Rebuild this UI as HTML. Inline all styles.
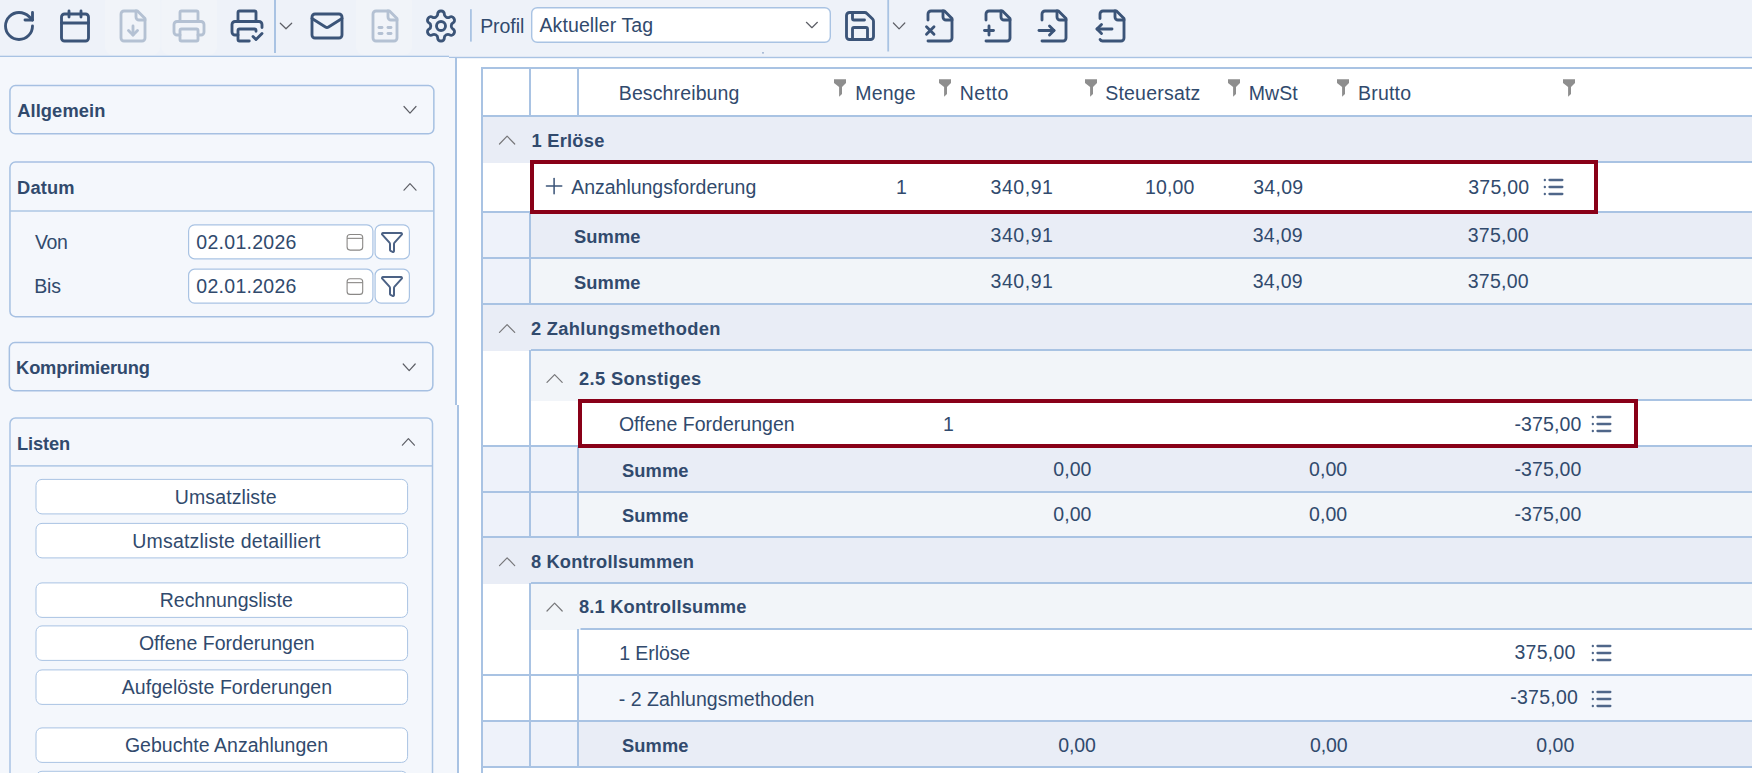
<!DOCTYPE html><html lang="de"><head><meta charset="utf-8"><title>Tagesabschluss</title><style>

html,body{margin:0;padding:0}
body{width:1752px;height:773px;overflow:hidden;position:relative;background:#fff;
 font-family:"Liberation Sans",Arial,sans-serif;color:#314a6d;}
#bg{position:absolute;left:0;top:0}
.t{position:absolute;white-space:nowrap;line-height:1;font-size:19.5px}
.b{font-weight:bold;font-size:18.3px}
.ic{position:absolute;overflow:visible}

</style></head><body>
<svg id="bg" width="1752" height="773" viewBox="0 0 1752 773"><rect x="0" y="0" width="449" height="56" fill="#eef2f9"/><rect x="449" y="0" width="1303" height="57" fill="#eef2f9"/><rect x="105" y="-6" width="55.30000000000001" height="61" rx="8" fill="#f1f4f9"/><rect x="161.3" y="-6" width="55.69999999999999" height="61" rx="8" fill="#f1f4f9"/><rect x="356" y="-6" width="56" height="61" rx="8" fill="#f1f4f9"/><rect x="0" y="55.7" width="449" height="1.4" fill="#a9c3e3"/><rect x="449" y="56.8" width="1303" height="1.4" fill="#a9c3e3"/><rect x="0" y="57.1" width="449" height="715.9" fill="#f4f7fc"/><rect x="449" y="58.2" width="7" height="714.8" fill="#f4f7fc"/><rect x="456" y="405" width="2" height="368" fill="#f4f7fc"/><rect x="455" y="57.5" width="2" height="347.5" fill="#a9c3e3"/><rect x="457" y="405" width="2" height="368" fill="#a9c3e3"/><rect x="274" y="0" width="2" height="53" fill="#a9c3e3"/><rect x="470" y="9.2" width="1.8" height="32.4" fill="#a9c3e3"/><rect x="887.3" y="0" width="1.8" height="51.5" fill="#a9c3e3"/><path d="M280.30 23.20 L286.00 28.80 L291.70 23.20" fill="none" stroke="#5d5f66" stroke-width="1.2" stroke-linecap="round" stroke-linejoin="round"/><path d="M893.40 23.00 L899.10 28.80 L904.80 23.00" fill="none" stroke="#5d5f66" stroke-width="1.2" stroke-linecap="round" stroke-linejoin="round"/><rect x="531.7" y="7.7" width="298.6" height="34.6" rx="5.5" fill="#fff" stroke="#a9c3e3" stroke-width="1.4"/><path d="M806.40 22.30 L811.90 27.70 L817.40 22.30" fill="none" stroke="#5d5f66" stroke-width="1.2" stroke-linecap="round" stroke-linejoin="round"/><circle cx="763" cy="52.8" r="0.9" fill="#8ea6c9"/><rect x="9.95" y="85.55" width="423.90000000000003" height="48.3" rx="5.5" fill="none" stroke="#a6c0e2" stroke-width="1.5"/><rect x="9.95" y="162.05" width="423.90000000000003" height="154.59999999999997" rx="5.5" fill="none" stroke="#a6c0e2" stroke-width="1.5"/><rect x="10.2" y="210.3" width="423.40000000000003" height="1.4" fill="#a9c3e3"/><rect x="9.35" y="342.55" width="423.5" height="48.30000000000001" rx="5.5" fill="none" stroke="#a6c0e2" stroke-width="1.5"/><path d="M10 778 V423.5 a5.5 5.5 0 0 1 5.5 -5.5 H427 a5.5 5.5 0 0 1 5.5 5.5 V778" fill="none" stroke="#a9c3e3" stroke-width="1.5"/><rect x="10.5" y="465.2" width="421.5" height="1.4" fill="#a9c3e3"/><path d="M404.00 106.50 L410.00 113.10 L416.00 106.50" fill="none" stroke="#5d5f66" stroke-width="1.2" stroke-linecap="round" stroke-linejoin="round"/><path d="M404.00 190.20 L410.00 183.60 L416.00 190.20" fill="none" stroke="#5d5f66" stroke-width="1.2" stroke-linecap="round" stroke-linejoin="round"/><path d="M403.20 364.00 L409.20 370.60 L415.20 364.00" fill="none" stroke="#5d5f66" stroke-width="1.2" stroke-linecap="round" stroke-linejoin="round"/><path d="M402.40 445.20 L408.40 438.60 L414.40 445.20" fill="none" stroke="#5d5f66" stroke-width="1.2" stroke-linecap="round" stroke-linejoin="round"/><rect x="188.6" y="224.9" width="184.3" height="33.9" rx="6" fill="#fff" stroke="#a9c3e3" stroke-width="1.2"/><rect x="375.1" y="224.9" width="34.3" height="33.9" rx="6" fill="#fff" stroke="#a9c3e3" stroke-width="1.2"/><rect x="347.1" y="234.5" width="15.6" height="15.6" rx="3" fill="none" stroke="#8a8886" stroke-width="1.1"/><rect x="347.1" y="237.8" width="15.6" height="1.1" fill="#8a8886"/><rect x="188.6" y="269.20000000000005" width="184.3" height="33.9" rx="6" fill="#fff" stroke="#a9c3e3" stroke-width="1.2"/><rect x="375.1" y="269.20000000000005" width="34.3" height="33.9" rx="6" fill="#fff" stroke="#a9c3e3" stroke-width="1.2"/><rect x="347.1" y="278.8" width="15.6" height="15.6" rx="3" fill="none" stroke="#8a8886" stroke-width="1.1"/><rect x="347.1" y="282.1" width="15.6" height="1.1" fill="#8a8886"/><rect x="36" y="479.4" width="371.6" height="34.5" rx="6" fill="#fff" stroke="#a9c3e3" stroke-width="1"/><rect x="36" y="523.4" width="371.6" height="34.5" rx="6" fill="#fff" stroke="#a9c3e3" stroke-width="1"/><rect x="36" y="582.9" width="371.6" height="34.5" rx="6" fill="#fff" stroke="#a9c3e3" stroke-width="1"/><rect x="36" y="625.9" width="371.6" height="34.5" rx="6" fill="#fff" stroke="#a9c3e3" stroke-width="1"/><rect x="36" y="669.9" width="371.6" height="34.5" rx="6" fill="#fff" stroke="#a9c3e3" stroke-width="1"/><rect x="36" y="727.9" width="371.6" height="34.5" rx="6" fill="#fff" stroke="#a9c3e3" stroke-width="1"/><rect x="36" y="771.3" width="371.6" height="34.5" rx="6" fill="#fff" stroke="#a9c3e3" stroke-width="1"/><rect x="483" y="116" width="1269" height="47" fill="#e9edf6"/><rect x="483" y="212" width="1269" height="46" fill="#eef2fa"/><rect x="531" y="212" width="1221" height="46" fill="#e9edf6"/><rect x="483" y="258" width="1269" height="46" fill="#eef2fa"/><rect x="531" y="258" width="1221" height="46" fill="#f2f5f9"/><rect x="483" y="304" width="1269" height="47" fill="#e9edf6"/><rect x="531" y="350" width="1221" height="51" fill="#f2f5f9"/><rect x="483" y="446" width="1269" height="46" fill="#eef2fa"/><rect x="579" y="446" width="1173" height="46" fill="#e9edf6"/><rect x="483" y="492" width="1269" height="45" fill="#eef2fa"/><rect x="579" y="492" width="1173" height="45" fill="#f2f5f9"/><rect x="483" y="537" width="1269" height="47" fill="#e9edf6"/><rect x="531" y="583" width="1221" height="47" fill="#f2f5f9"/><rect x="579" y="675" width="1173" height="46" fill="#f4f7fc"/><rect x="483" y="721" width="1269" height="46" fill="#eef2fa"/><rect x="579" y="721" width="1173" height="46" fill="#e9edf6"/><rect x="481" y="67" width="1271" height="2" fill="#a9c3e3"/><rect x="481" y="115" width="1271" height="2" fill="#a9c3e3"/><rect x="531" y="161" width="1221" height="2" fill="#a9c3e3"/><rect x="483" y="211" width="1269" height="2" fill="#a9c3e3"/><rect x="483" y="257" width="1269" height="2" fill="#a9c3e3"/><rect x="483" y="303" width="1269" height="2" fill="#a9c3e3"/><rect x="531" y="349" width="1221" height="2" fill="#a9c3e3"/><rect x="579" y="399" width="1173" height="2" fill="#a9c3e3"/><rect x="483" y="445" width="1269" height="2" fill="#a9c3e3"/><rect x="483" y="491" width="1269" height="2" fill="#a9c3e3"/><rect x="483" y="536" width="1269" height="2" fill="#a9c3e3"/><rect x="531" y="582" width="1221" height="2" fill="#a9c3e3"/><rect x="580.5" y="628" width="1171.5" height="2" fill="#a9c3e3"/><rect x="483" y="674" width="1269" height="2" fill="#a9c3e3"/><rect x="483" y="720" width="1269" height="2" fill="#a9c3e3"/><rect x="483" y="766" width="1269" height="2" fill="#a9c3e3"/><rect x="481" y="67" width="2" height="706" fill="#a9c3e3"/><rect x="529" y="68" width="2" height="48" fill="#a9c3e3"/><rect x="529" y="212" width="2" height="92" fill="#a9c3e3"/><rect x="529" y="350" width="2" height="187" fill="#a9c3e3"/><rect x="529" y="583" width="2" height="184" fill="#a9c3e3"/><rect x="577" y="68" width="2" height="48" fill="#a9c3e3"/><rect x="577" y="446" width="2" height="91" fill="#a9c3e3"/><rect x="577" y="629" width="2" height="138" fill="#a9c3e3"/><rect x="532" y="162" width="1064" height="50" fill="#fff" stroke="#890018" stroke-width="4"/><rect x="580" y="401" width="1056" height="45" fill="#fff" stroke="#890018" stroke-width="4"/><polygon fill="#8e8e8e" points="834.0,79.3 846.0,79.3 846.0,83.1 842.0,87.1 842.0,93.9 839.1,96.8 839.1,87.1 834.0,83.1"/><polygon fill="#8e8e8e" points="939.0,79.3 951.0,79.3 951.0,83.1 947.0,87.1 947.0,93.9 944.1,96.8 944.1,87.1 939.0,83.1"/><polygon fill="#8e8e8e" points="1085.0,79.3 1097.0,79.3 1097.0,83.1 1093.0,87.1 1093.0,93.9 1090.1,96.8 1090.1,87.1 1085.0,83.1"/><polygon fill="#8e8e8e" points="1228.0,79.3 1240.0,79.3 1240.0,83.1 1236.0,87.1 1236.0,93.9 1233.1,96.8 1233.1,87.1 1228.0,83.1"/><polygon fill="#8e8e8e" points="1337.0,79.3 1349.0,79.3 1349.0,83.1 1345.0,87.1 1345.0,93.9 1342.1,96.8 1342.1,87.1 1337.0,83.1"/><polygon fill="#8e8e8e" points="1563.0,79.3 1575.0,79.3 1575.0,83.1 1571.0,87.1 1571.0,93.9 1568.1,96.8 1568.1,87.1 1563.0,83.1"/><path d="M499.50 144.00 L507.10 136.20 L514.70 144.00" fill="none" stroke="#77777a" stroke-width="1.2" stroke-linecap="round" stroke-linejoin="round"/><path d="M499.50 332.40 L507.10 324.60 L514.70 332.40" fill="none" stroke="#77777a" stroke-width="1.2" stroke-linecap="round" stroke-linejoin="round"/><path d="M547.00 382.40 L554.60 374.60 L562.20 382.40" fill="none" stroke="#77777a" stroke-width="1.2" stroke-linecap="round" stroke-linejoin="round"/><path d="M499.50 565.60 L507.10 557.80 L514.70 565.60" fill="none" stroke="#77777a" stroke-width="1.2" stroke-linecap="round" stroke-linejoin="round"/><path d="M547.00 611.00 L554.60 603.20 L562.20 611.00" fill="none" stroke="#77777a" stroke-width="1.2" stroke-linecap="round" stroke-linejoin="round"/></svg>
<div id="toolbar">
<svg class="ic" style="left:0.80px;top:7.70px" width="36.00" height="36.00" viewBox="0 0 24 24" fill="none" stroke="#3b5478" stroke-width="1.9" stroke-linecap="round" stroke-linejoin="round"><path d="M21 12a9 9 0 1 1-9-9c2.52 0 4.93 1 6.74 2.74L21 8"/><path d="M21 3v5h-5"/></svg>
<svg class="ic" style="left:57.00px;top:7.70px" width="36.00" height="36.00" viewBox="0 0 24 24" fill="none" stroke="#3b5478" stroke-width="1.9" stroke-linecap="round" stroke-linejoin="round"><path d="M8 2v4"/><path d="M16 2v4"/><rect width="18" height="18" x="3" y="4" rx="2"/><path d="M3 10h18"/></svg>
<svg class="ic" style="left:114.90px;top:7.70px" width="36.00" height="36.00" viewBox="0 0 24 24" fill="none" stroke="#b4c1d3" stroke-width="1.9" stroke-linecap="round" stroke-linejoin="round"><path d="M15 2H6a2 2 0 0 0-2 2v16a2 2 0 0 0 2 2h12a2 2 0 0 0 2-2V7Z"/><path d="M14 2v4a2 2 0 0 0 2 2h4"/><path d="M12 18v-6"/><path d="m9 15 3 3 3-3"/></svg>
<svg class="ic" style="left:171.10px;top:7.70px" width="36.00" height="36.00" viewBox="0 0 24 24" fill="none" stroke="#b4c1d3" stroke-width="1.9" stroke-linecap="round" stroke-linejoin="round"><path d="M6 18H4a2 2 0 0 1-2-2v-5a2 2 0 0 1 2-2h16a2 2 0 0 1 2 2v5a2 2 0 0 1-2 2h-2"/><path d="M6 9V3a1 1 0 0 1 1-1h10a1 1 0 0 1 1 1v6"/><rect x="6" y="14" width="12" height="8" rx="1"/></svg>
<svg class="ic" style="left:229.05px;top:7.70px" width="36.00" height="36.00" viewBox="0 0 24 24" fill="none" stroke="#3b5478" stroke-width="1.9" stroke-linecap="round" stroke-linejoin="round"><path d="M13.5 22H7a1 1 0 0 1-1-1v-6a1 1 0 0 1 1-1h10a1 1 0 0 1 1 1v.5"/><path d="m16 19 2 2 4-4"/><path d="M6 18H4a2 2 0 0 1-2-2v-5a2 2 0 0 1 2-2h16a2 2 0 0 1 2 2v2"/><path d="M6 9V3a1 1 0 0 1 1-1h10a1 1 0 0 1 1 1v6"/></svg>
<svg class="ic" style="left:309.00px;top:7.70px" width="36.00" height="36.00" viewBox="0 0 24 24" fill="none" stroke="#3b5478" stroke-width="1.9" stroke-linecap="round" stroke-linejoin="round"><rect width="20" height="16" x="2" y="4" rx="2"/><path d="m22 7-8.97 5.7a1.94 1.94 0 0 1-2.06 0L2 7"/></svg>
<svg class="ic" style="left:367.05px;top:7.70px" width="36.00" height="36.00" viewBox="0 0 24 24" fill="none" stroke="#b4c1d3" stroke-width="1.9" stroke-linecap="round" stroke-linejoin="round"><path d="M15 2H6a2 2 0 0 0-2 2v16a2 2 0 0 0 2 2h12a2 2 0 0 0 2-2V7Z"/><path d="M14 2v4a2 2 0 0 0 2 2h4"/><path d="M8 13h2"/><path d="M14 13h2"/><path d="M8 17h2"/><path d="M14 17h2"/></svg>
<svg class="ic" style="left:423.05px;top:7.70px" width="36.00" height="36.00" viewBox="0 0 24 24" fill="none" stroke="#3b5478" stroke-width="1.9" stroke-linecap="round" stroke-linejoin="round"><path d="M12.22 2h-.44a2 2 0 0 0-2 2v.18a2 2 0 0 1-1 1.73l-.43.25a2 2 0 0 1-2 0l-.15-.08a2 2 0 0 0-2.73.73l-.22.38a2 2 0 0 0 .73 2.73l.15.1a2 2 0 0 1 1 1.72v.51a2 2 0 0 1-1 1.74l-.15.09a2 2 0 0 0-.73 2.73l.22.38a2 2 0 0 0 2.73.73l.15-.08a2 2 0 0 1 2 0l.43.25a2 2 0 0 1 1 1.73V20a2 2 0 0 0 2 2h.44a2 2 0 0 0 2-2v-.18a2 2 0 0 1 1-1.73l.43-.25a2 2 0 0 1 2 0l.15.08a2 2 0 0 0 2.73-.73l.22-.39a2 2 0 0 0-.73-2.73l-.15-.08a2 2 0 0 1-1-1.74v-.5a2 2 0 0 1 1-1.74l.15-.09a2 2 0 0 0 .73-2.73l-.22-.38a2 2 0 0 0-2.73-.73l-.15.08a2 2 0 0 1-2 0l-.43-.25a2 2 0 0 1-1-1.73V4a2 2 0 0 0-2-2z"/><circle cx="12" cy="12" r="3"/></svg>
<svg class="ic" style="left:842.05px;top:7.70px" width="36.00" height="36.00" viewBox="0 0 24 24" fill="none" stroke="#3b5478" stroke-width="1.9" stroke-linecap="round" stroke-linejoin="round"><path d="M15.2 3a2 2 0 0 1 1.4.6l3.8 3.8a2 2 0 0 1 .6 1.4V19a2 2 0 0 1-2 2H5a2 2 0 0 1-2-2V5a2 2 0 0 1 2-2z"/><path d="M17 21v-7a1 1 0 0 0-1-1H8a1 1 0 0 0-1 1v7"/><path d="M7 3v4a1 1 0 0 0 1 1h7"/></svg>
<svg class="ic" style="left:922.00px;top:7.70px" width="36.00" height="36.00" viewBox="0 0 24 24" fill="none" stroke="#3b5478" stroke-width="1.9" stroke-linecap="round" stroke-linejoin="round"><path d="M4 22h14a2 2 0 0 0 2-2V7l-5-5H6a2 2 0 0 0-2 2v4"/><path d="M14 2v4a2 2 0 0 0 2 2h4"/><path d="m8 12.5-5 5"/><path d="m3 12.5 5 5"/></svg>
<svg class="ic" style="left:980.00px;top:7.70px" width="36.00" height="36.00" viewBox="0 0 24 24" fill="none" stroke="#3b5478" stroke-width="1.9" stroke-linecap="round" stroke-linejoin="round"><path d="M4 22h14a2 2 0 0 0 2-2V7l-5-5H6a2 2 0 0 0-2 2v4"/><path d="M14 2v4a2 2 0 0 0 2 2h4"/><path d="M3 15h6"/><path d="M6 12v6"/></svg>
<svg class="ic" style="left:1036.00px;top:7.70px" width="36.00" height="36.00" viewBox="0 0 24 24" fill="none" stroke="#3b5478" stroke-width="1.9" stroke-linecap="round" stroke-linejoin="round"><path d="M4 22h14a2 2 0 0 0 2-2V7l-5-5H6a2 2 0 0 0-2 2v4"/><path d="M14 2v4a2 2 0 0 0 2 2h4"/><path d="M2 15h10"/><path d="m9 18 3-3-3-3"/></svg>
<svg class="ic" style="left:1094.00px;top:7.70px" width="36.00" height="36.00" viewBox="0 0 24 24" fill="none" stroke="#3b5478" stroke-width="1.9" stroke-linecap="round" stroke-linejoin="round"><path d="M14 2v4a2 2 0 0 0 2 2h4"/><path d="M4 7V4a2 2 0 0 1 2-2h9l5 5v13a2 2 0 0 1-2 2H6a2 2 0 0 1-1.94-1"/><path d="m5 11-3 3 3 3"/><path d="M2 14h10"/></svg>
</div>
<svg class="ic" style="left:380.20px;top:229.70px" width="24.00" height="24.00" viewBox="0 0 24 24" fill="none" stroke="#4c6285" stroke-width="2" stroke-linecap="round" stroke-linejoin="round"><path d="M10 20a1 1 0 0 0 .553.895l2 1A1 1 0 0 0 14 21v-7a2 2 0 0 1 .517-1.341L21.74 4.67A1 1 0 0 0 21 3H3a1 1 0 0 0-.742 1.67l7.225 7.989A2 2 0 0 1 10 14z"/></svg>
<svg class="ic" style="left:380.20px;top:274.00px" width="24.00" height="24.00" viewBox="0 0 24 24" fill="none" stroke="#4c6285" stroke-width="2" stroke-linecap="round" stroke-linejoin="round"><path d="M10 20a1 1 0 0 0 .553.895l2 1A1 1 0 0 0 14 21v-7a2 2 0 0 1 .517-1.341L21.74 4.67A1 1 0 0 0 21 3H3a1 1 0 0 0-.742 1.67l7.225 7.989A2 2 0 0 1 10 14z"/></svg>
<svg class="ic" style="left:1539.20px;top:173.00px" width="28.00" height="28.00" viewBox="0 0 24 24" fill="none" stroke="#4f6689" stroke-width="2" stroke-linecap="round" stroke-linejoin="round"><path d="M9 6h11"/><path d="M9 12h11"/><path d="M9 18h11"/><path d="M5 6v.01"/><path d="M5 12v.01"/><path d="M5 18v.01"/></svg>
<svg class="ic" style="left:1587.40px;top:410.00px" width="28.00" height="28.00" viewBox="0 0 24 24" fill="none" stroke="#4f6689" stroke-width="2" stroke-linecap="round" stroke-linejoin="round"><path d="M9 6h11"/><path d="M9 12h11"/><path d="M9 18h11"/><path d="M5 6v.01"/><path d="M5 12v.01"/><path d="M5 18v.01"/></svg>
<svg class="ic" style="left:1587.40px;top:639.10px" width="28.00" height="28.00" viewBox="0 0 24 24" fill="none" stroke="#4f6689" stroke-width="2" stroke-linecap="round" stroke-linejoin="round"><path d="M9 6h11"/><path d="M9 12h11"/><path d="M9 18h11"/><path d="M5 6v.01"/><path d="M5 12v.01"/><path d="M5 18v.01"/></svg>
<svg class="ic" style="left:1587.40px;top:685.10px" width="28.00" height="28.00" viewBox="0 0 24 24" fill="none" stroke="#4f6689" stroke-width="2" stroke-linecap="round" stroke-linejoin="round"><path d="M9 6h11"/><path d="M9 12h11"/><path d="M9 18h11"/><path d="M5 6v.01"/><path d="M5 12v.01"/><path d="M5 18v.01"/></svg>
<svg class="ic" style="left:541.20px;top:173.40px" width="26.20" height="26.20" viewBox="0 0 24 24" fill="none" stroke="#3b5478" stroke-width="1.4" stroke-linecap="round" stroke-linejoin="round"><path d="M5 12h14"/><path d="M12 5v14"/></svg>
<div id="toolbar-labels">
<span class="t" id="t0" style="left:480.17px;top:17px;letter-spacing:-0.062px;">Profil</span>
<span class="t" id="t1" style="left:539.48px;top:16px;letter-spacing:0.107px;">Aktueller Tag</span>
</div>
<div id="sidebar">
<span class="t b" id="t2" style="left:17.14px;top:102px;letter-spacing:0.115px;">Allgemein</span>
<span class="t b" id="t3" style="left:17.11px;top:179px;letter-spacing:0.141px;">Datum</span>
<span class="t" id="t4" style="left:34.95px;top:233px;letter-spacing:-0.297px;">Von</span>
<span class="t" id="t5" style="left:34.27px;top:277px;letter-spacing:-0.195px;">Bis</span>
<span class="t" id="t6" style="left:196.29px;top:233px;letter-spacing:0.286px;">02.01.2026</span>
<span class="t" id="t7" style="left:196.29px;top:277px;letter-spacing:0.286px;">02.01.2026</span>
<span class="t b" id="t8" style="left:16.11px;top:359px;letter-spacing:-0.186px;">Komprimierung</span>
<span class="t b" id="t9" style="left:17.11px;top:435px;letter-spacing:-0.155px;">Listen</span>
<span class="t" id="t10" style="left:174.87px;top:488px;letter-spacing:0.094px;">Umsatzliste</span>
<span class="t" id="t11" style="left:132.37px;top:532px;letter-spacing:0.179px;">Umsatzliste detailliert</span>
<span class="t" id="t12" style="left:159.77px;top:591px;letter-spacing:-0.025px;">Rechnungsliste</span>
<span class="t" id="t13" style="left:138.93px;top:634px;letter-spacing:0.026px;">Offene Forderungen</span>
<span class="t" id="t14" style="left:121.73px;top:678px;letter-spacing:0.055px;">Aufgelöste Forderungen</span>
<span class="t" id="t15" style="left:124.92px;top:736px;letter-spacing:0.020px;">Gebuchte Anzahlungen</span>
</div>
<div id="grid-header">
<span class="t" id="t16" style="left:618.77px;top:84px;letter-spacing:0.127px;">Beschreibung</span>
<span class="t" id="t17" style="left:855.27px;top:84px;letter-spacing:0.170px;">Menge</span>
<span class="t" id="t18" style="left:959.77px;top:84px;letter-spacing:0.494px;">Netto</span>
<span class="t" id="t19" style="left:1105.20px;top:84px;letter-spacing:0.216px;">Steuersatz</span>
<span class="t" id="t20" style="left:1248.77px;top:84px;letter-spacing:0.073px;">MwSt</span>
<span class="t" id="t21" style="left:1358.02px;top:84px;letter-spacing:0.193px;">Brutto</span>
</div>
<div id="grid-body">
<span class="t b" id="t22" style="left:531.55px;top:132px;letter-spacing:0.232px;">1 Erlöse</span>
<span class="t" id="t23" style="left:571.23px;top:178px;letter-spacing:-0.021px;">Anzahlungsforderung</span>
<span class="t" id="t24" style="left:895.89px;top:178px;letter-spacing:0.000px;">1</span>
<span class="t" id="t25" style="left:990.55px;top:178px;letter-spacing:0.549px;">340,91</span>
<span class="t" id="t26" style="left:1145.04px;top:178px;letter-spacing:0.160px;">10,00</span>
<span class="t" id="t27" style="left:1253.20px;top:178px;letter-spacing:0.300px;">34,09</span>
<span class="t" id="t28" style="left:1468.20px;top:178px;letter-spacing:0.255px;">375,00</span>
<span class="t b" id="t29" style="left:574.00px;top:228px;letter-spacing:0.091px;">Summe</span>
<span class="t" id="t30" style="left:990.55px;top:226px;letter-spacing:0.549px;">340,91</span>
<span class="t" id="t31" style="left:1252.70px;top:226px;letter-spacing:0.300px;">34,09</span>
<span class="t" id="t32" style="left:1467.70px;top:226px;letter-spacing:0.255px;">375,00</span>
<span class="t b" id="t33" style="left:574.00px;top:274px;letter-spacing:0.091px;">Summe</span>
<span class="t" id="t34" style="left:990.55px;top:272px;letter-spacing:0.549px;">340,91</span>
<span class="t" id="t35" style="left:1252.70px;top:272px;letter-spacing:0.300px;">34,09</span>
<span class="t" id="t36" style="left:1467.70px;top:272px;letter-spacing:0.255px;">375,00</span>
<span class="t b" id="t37" style="left:530.89px;top:320px;letter-spacing:0.341px;">2 Zahlungsmethoden</span>
<span class="t b" id="t38" style="left:578.89px;top:370px;letter-spacing:0.379px;">2.5 Sonstiges</span>
<span class="t" id="t39" style="left:618.93px;top:415px;letter-spacing:0.030px;">Offene Forderungen</span>
<span class="t" id="t40" style="left:942.89px;top:415px;letter-spacing:0.000px;">1</span>
<span class="t" id="t41" style="left:1514.47px;top:415px;letter-spacing:0.139px;">-375,00</span>
<span class="t b" id="t42" style="left:622.00px;top:462px;letter-spacing:0.092px;">Summe</span>
<span class="t" id="t43" style="left:1053.29px;top:460px;letter-spacing:0.052px;">0,00</span>
<span class="t" id="t44" style="left:1309.04px;top:460px;letter-spacing:0.052px;">0,00</span>
<span class="t" id="t45" style="left:1514.47px;top:460px;letter-spacing:0.139px;">-375,00</span>
<span class="t b" id="t46" style="left:622.00px;top:507px;letter-spacing:0.092px;">Summe</span>
<span class="t" id="t47" style="left:1053.29px;top:505px;letter-spacing:0.052px;">0,00</span>
<span class="t" id="t48" style="left:1309.04px;top:505px;letter-spacing:0.052px;">0,00</span>
<span class="t" id="t49" style="left:1514.47px;top:505px;letter-spacing:0.139px;">-375,00</span>
<span class="t b" id="t50" style="left:530.92px;top:553px;letter-spacing:0.166px;">8 Kontrollsummen</span>
<span class="t b" id="t51" style="left:578.92px;top:598px;letter-spacing:0.186px;">8.1 Kontrollsumme</span>
<span class="t" id="t52" style="left:619.29px;top:644px;letter-spacing:-0.086px;">1 Erlöse</span>
<span class="t" id="t53" style="left:1514.45px;top:643px;letter-spacing:0.255px;">375,00</span>
<span class="t" id="t54" style="left:618.72px;top:690px;letter-spacing:0.033px;">- 2 Zahlungsmethoden</span>
<span class="t" id="t55" style="left:1510.22px;top:688px;letter-spacing:0.246px;">-375,00</span>
<span class="t b" id="t56" style="left:622.00px;top:737px;letter-spacing:0.092px;">Summe</span>
<span class="t" id="t57" style="left:1058.29px;top:736px;letter-spacing:-0.123px;">0,00</span>
<span class="t" id="t58" style="left:1310.04px;top:736px;letter-spacing:-0.123px;">0,00</span>
<span class="t" id="t59" style="left:1536.29px;top:736px;letter-spacing:-0.001px;">0,00</span>
</div>
</body></html>
